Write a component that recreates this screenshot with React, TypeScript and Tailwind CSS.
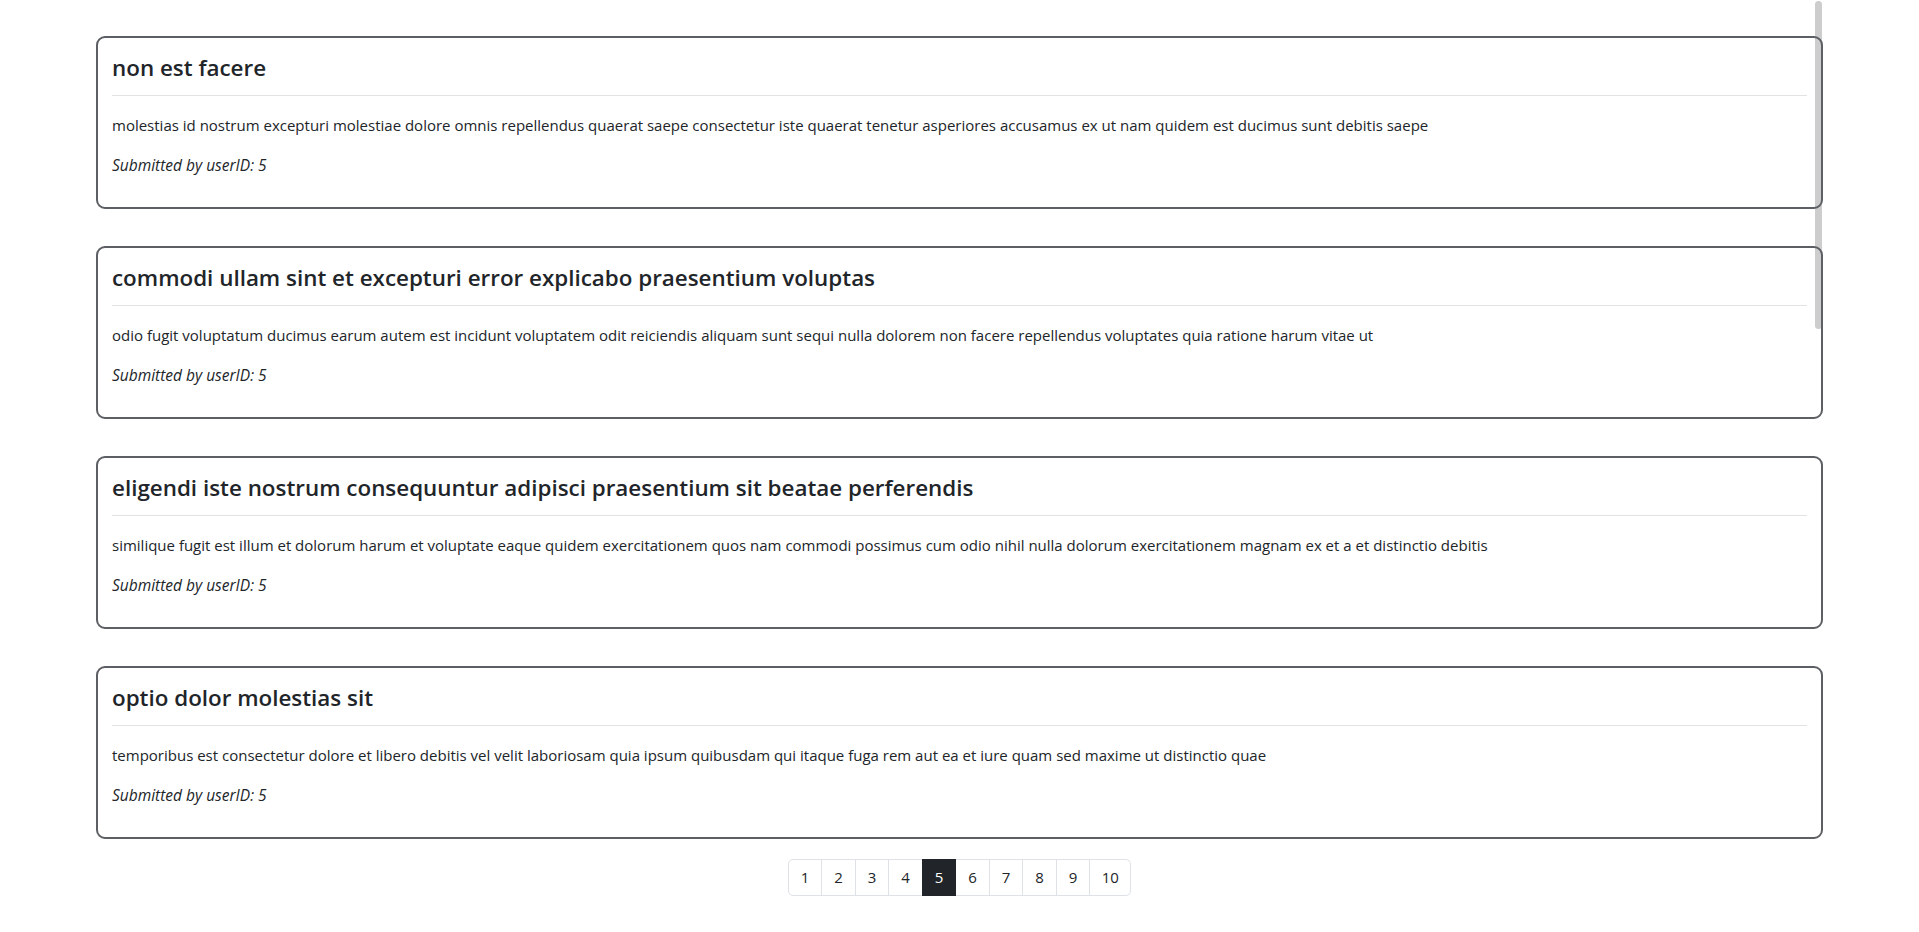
const posts = [
  {
    title: 'non est facere',
    body: 'molestias id nostrum excepturi molestiae dolore omnis repellendus quaerat saepe consectetur iste quaerat tenetur asperiores accusamus ex ut nam quidem est ducimus sunt debitis saepe',
  },
  {
    title: 'commodi ullam sint et excepturi error explicabo praesentium voluptas',
    body: 'odio fugit voluptatum ducimus earum autem est incidunt voluptatem odit reiciendis aliquam sunt sequi nulla dolorem non facere repellendus voluptates quia ratione harum vitae ut',
  },
  {
    title: 'eligendi iste nostrum consequuntur adipisci praesentium sit beatae perferendis',
    body: 'similique fugit est illum et dolorum harum et voluptate eaque quidem exercitationem quos nam commodi possimus cum odio nihil nulla dolorum exercitationem magnam ex et a et distinctio debitis',
  },
  {
    title: 'optio dolor molestias sit',
    body: 'temporibus est consectetur dolore et libero debitis vel velit laboriosam quia ipsum quibusdam qui itaque fuga rem aut ea et iure quam sed maxime ut distinctio quae',
  },
];

const pages = [1, 2, 3, 4, 5, 6, 7, 8, 9, 10];
const currentPage = 5;

function PostCard({ title, body }: { title: string; body: string }) {
  return (
    <div className="relative z-10 border-2 border-[#5c5f63] rounded-[9px] px-[14px] pt-[15px] pb-[30px]">
      <h5 className="text-[22.4px] leading-[29px] font-semibold text-[#212529]">{title}</h5>
      <hr className="mt-[13px] border-0 border-t border-[#e1e2e3]" />
      <p className="mt-[17px] text-[15px] leading-[24px] text-[#212529]">{body}</p>
      <p className="mt-[16px] text-[15.5px] leading-[24px] italic text-[#212529]">Submitted by userID: 5</p>
    </div>
  );
}

export default function App() {
  return (
    <div className="min-h-[932px] bg-white font-['Open_Sans',sans-serif]">
      <div className="relative mx-auto w-[1727px] pt-[36px]">
        {/* overlay scrollbar thumb */}
        <div className="absolute right-[1px] top-[1px] w-[7px] h-[328px] rounded-full bg-[#cdcdcd]" />

        <div className="flex flex-col gap-[37px]">
          {posts.map(post => (
            <PostCard key={post.title} title={post.title} body={post.body} />
          ))}
        </div>

        <div className="flex justify-center mt-[20px]">
          <div className="flex">
            {pages.map((p, i) => {
              const active = p === currentPage;
              return (
                <button
                  key={p}
                  className={`h-[37px] flex items-center justify-center border text-[15px] ${
                    p === 10 ? 'w-[42px]' : 'w-[34.5px]'
                  } ${i > 0 ? '-ml-px' : ''} ${i === 0 ? 'rounded-l-[5px]' : ''} ${
                    i === pages.length - 1 ? 'rounded-r-[5px]' : ''
                  } ${
                    active
                      ? 'relative z-10 bg-[#212529] border-[#212529] text-white'
                      : 'bg-white border-[#dee2e6] text-[#212529]'
                  }`}
                >
                  {p}
                </button>
              );
            })}
          </div>
        </div>
      </div>
    </div>
  );
}
